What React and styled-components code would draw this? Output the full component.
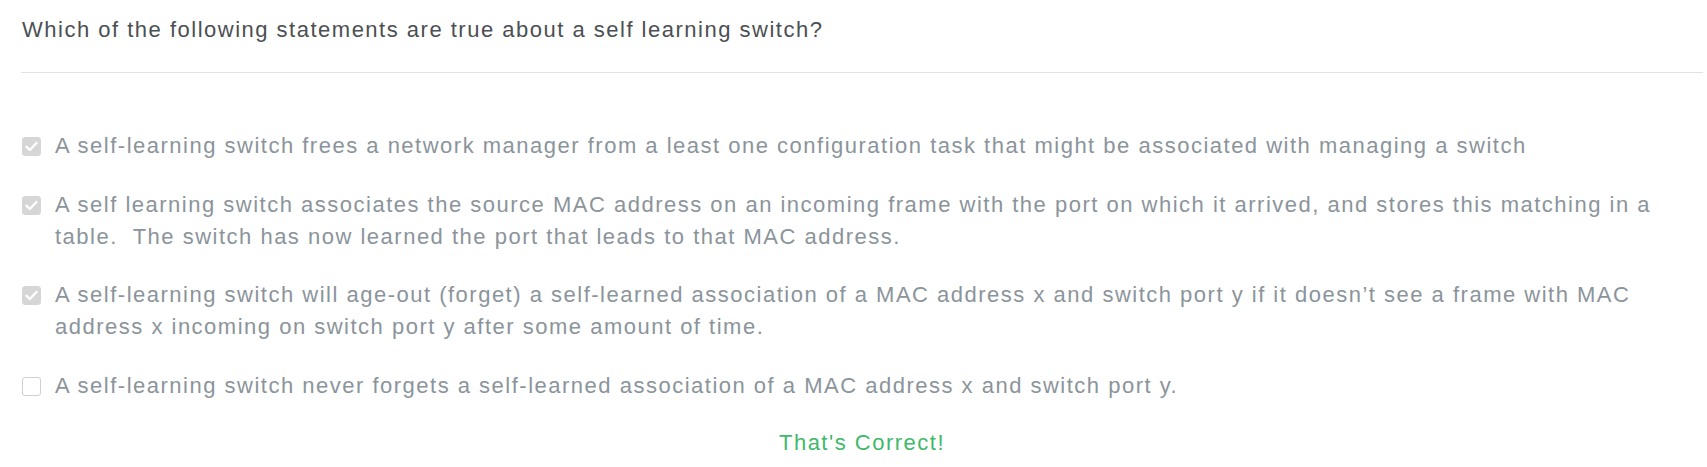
import React from "react";
import styled, { createGlobalStyle } from "styled-components";

const Global = createGlobalStyle`
  html, body { margin: 0; padding: 0; background: #ffffff; }
  body { font-family: "Liberation Sans", Arial, Helvetica, sans-serif; }
`;

const Wrapper = styled.div`
  padding: 14px 4px 0 21px;
`;

const Question = styled.div`
  font-size: 22px;
  line-height: 32px;
  letter-spacing: 1.5px;
  color: #4b4f53;
  padding-left: 1px;
  padding-bottom: 26px;
  border-bottom: 1px solid #e3e3e3;
`;

const Options = styled.div`
  display: flex;
  flex-direction: column;
  gap: 26.5px;
  padding-top: 57px;
`;

const Option = styled.label`
  display: flex;
  align-items: flex-start;
  gap: 14px;
  padding-left: 1px;
`;

const Box = styled.span`
  flex: none;
  width: 19px;
  height: 19px;
  margin-top: 7px;
  box-sizing: border-box;
  border-radius: 3px;
  display: flex;
  align-items: center;
  justify-content: center;
  background: ${(p) => (p.$checked ? "#d6d6d6" : "#ffffff")};
  border: 1px solid ${(p) => (p.$checked ? "#d6d6d6" : "#cfcfcf")};
`;

const OptionText = styled.span`
  font-size: 22px;
  line-height: 32px;
  letter-spacing: 1.5px;
  color: #8b949b;
`;

const Feedback = styled.div`
  margin-top: 25px;
  text-align: center;
  font-size: 22px;
  line-height: 32px;
  letter-spacing: 1.5px;
  color: #40b96b;
`;

const Check = () => (
  <svg width="13" height="11" viewBox="0 0 13 11">
    <path d="M1.5 5.8 L4.8 9 L11.5 2" fill="none" stroke="#ffffff" strokeWidth="2.4" strokeLinecap="round" strokeLinejoin="round" />
  </svg>
);

const options = [
  { checked: true, text: "A self-learning switch frees a network manager from a least one configuration task that might be associated with managing a switch" },
  { checked: true, text: "A self learning switch associates the source MAC address on an incoming frame with the port on which it arrived, and stores this matching in a table.\u00a0 The switch has now learned the port that leads to that MAC address." },
  { checked: true, text: "A self-learning switch will age-out (forget) a self-learned association of a MAC address x and switch port y if it doesn\u2019t see a frame with MAC address x incoming on switch port y after some amount of time." },
  { checked: false, text: "A self-learning switch never forgets a self-learned association of a MAC address x and switch port y." },
];

export default function App() {
  return (
    <>
      <Global />
      <Wrapper>
        <Question>Which of the following statements are true about a self learning switch?</Question>
        <Options>
          {options.map((o, i) => (
            <Option key={i}>
              <Box $checked={o.checked}>{o.checked && <Check />}</Box>
              <OptionText>{o.text}</OptionText>
            </Option>
          ))}
        </Options>
        <Feedback>That's Correct!</Feedback>
      </Wrapper>
    </>
  );
}
